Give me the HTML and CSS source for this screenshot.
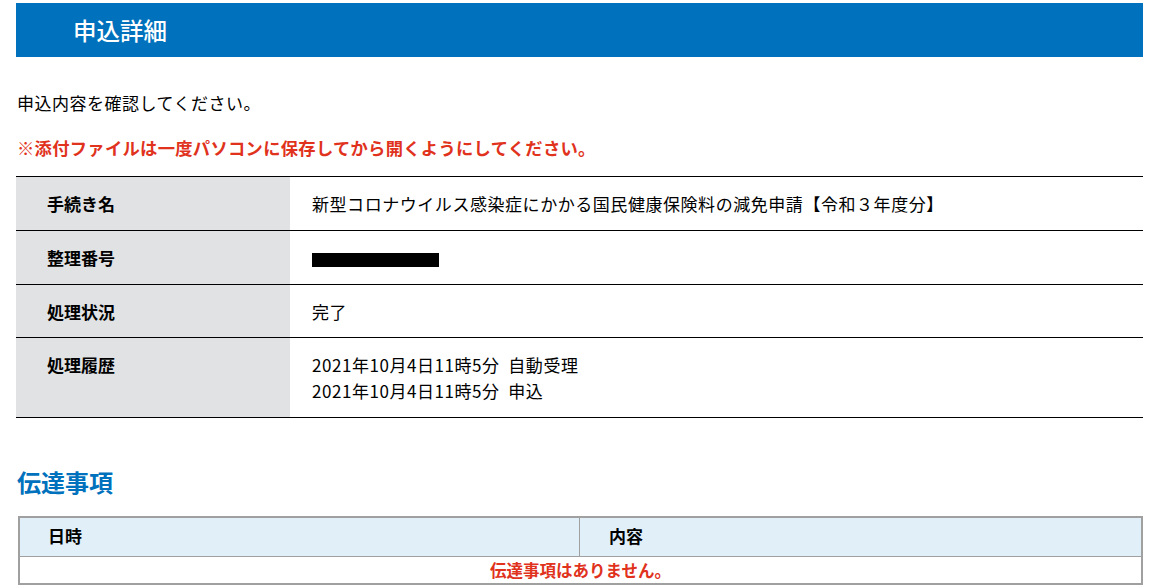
FILE: index.html
```html
<!DOCTYPE html>
<html lang="ja">
<head>
  <meta charset="UTF-8">
  <title>申込詳細</title>
  <link rel="stylesheet" href="styles.css">
</head>
<body>
  <div class="page">
    <h1 class="page-title">申込詳細</h1>

    <p class="intro">申込内容を確認してください。</p>
    <p class="notice">※添付ファイルは一度パソコンに保存してから開くようにしてください。</p>

    <table class="detail">
      <tr>
        <th>手続き名</th>
        <td>新型コロナウイルス感染症にかかる国民健康保険料の減免申請【令和３年度分】</td>
      </tr>
      <tr>
        <th>整理番号</th>
        <td><span class="masked"></span></td>
      </tr>
      <tr class="short">
        <th>処理状況</th>
        <td>完了</td>
      </tr>
      <tr>
        <th>処理履歴</th>
        <td>
          2021年10月4日11時5分&nbsp;&nbsp;自動受理<br>
          2021年10月4日11時5分&nbsp;&nbsp;申込
        </td>
      </tr>
    </table>

    <h2 class="section-title">伝達事項</h2>

    <table class="messages">
      <thead>
        <tr>
          <th class="col-date">日時</th>
          <th>内容</th>
        </tr>
      </thead>
      <tbody>
        <tr>
          <td colspan="2" class="empty">伝達事項はありません。</td>
        </tr>
      </tbody>
    </table>
  </div>
</body>
</html>
```

FILE: styles.css
```css
body {
  margin: 0;
  font-family: "Noto Sans CJK JP", "Noto Sans", sans-serif;
  color: #000;
  background: #fff;
}

.page {
  padding: 3px 13px 0 16px;
}

.page-title {
  margin: 0;
  height: 54px;
  display: flex;
  align-items: center;
  padding-left: 57px;
  background-color: #0071bc;
  color: #fff;
  font-size: 23.5px;
  font-weight: 500;
}

.intro {
  margin: 34px 0 0 1px;
  font-size: 17px;
  line-height: 24px;
  letter-spacing: 0.5px;
}

.notice {
  margin: 21px 0 0 1px;
  font-size: 17.3px;
  line-height: 24px;
  letter-spacing: 0.3px;
  font-weight: bold;
  color: #e0321c;
}

/* 申込内容 */
.detail {
  width: 100%;
  margin-top: 16px;
  border-collapse: collapse;
  font-size: 17px;
  line-height: 26px;
}

.detail tr {
  border-top: 1px solid #000;
  border-bottom: 1px solid #000;
}

.detail th,
.detail td {
  padding: 14px 0 13px;
  text-align: left;
  vertical-align: top;
}

.detail th {
  width: 243px;
  padding-left: 31px;
  background-color: #e1e2e4;
  font-weight: bold;
}

.detail td {
  padding-left: 22px;
  letter-spacing: 0.55px;
}

.detail .short td,
.detail .short th {
  padding-bottom: 12px;
}

.masked {
  display: inline-block;
  width: 127px;
  height: 14px;
  background: #000;
  vertical-align: middle;
}

.section-title {
  margin: 47px 0 0 1px;
  font-size: 24px;
  line-height: 34px;
  font-weight: bold;
  color: #0071bc;
}

/* 伝達事項 */
.messages {
  width: calc(100% - 2px);
  margin: 17px 0 0 2px;
  border-collapse: collapse;
  border: 2px solid #a0a0a0;
  font-size: 17px;
  line-height: 24px;
}

.messages th {
  padding: 6px 0 8px 29px;
  text-align: left;
  font-weight: bold;
  background-color: #e1eff9;
  border: 1px solid #a0a0a0;
}

.messages th.col-date {
  width: 531px;
  padding-left: 28px;
}

.messages td {
  padding: 1px 0 1px;
  border: 1px solid #a0a0a0;
}

.empty {
  text-align: center;
  font-weight: bold;
  font-size: 16.5px;
  color: #e0321c;
}
```
